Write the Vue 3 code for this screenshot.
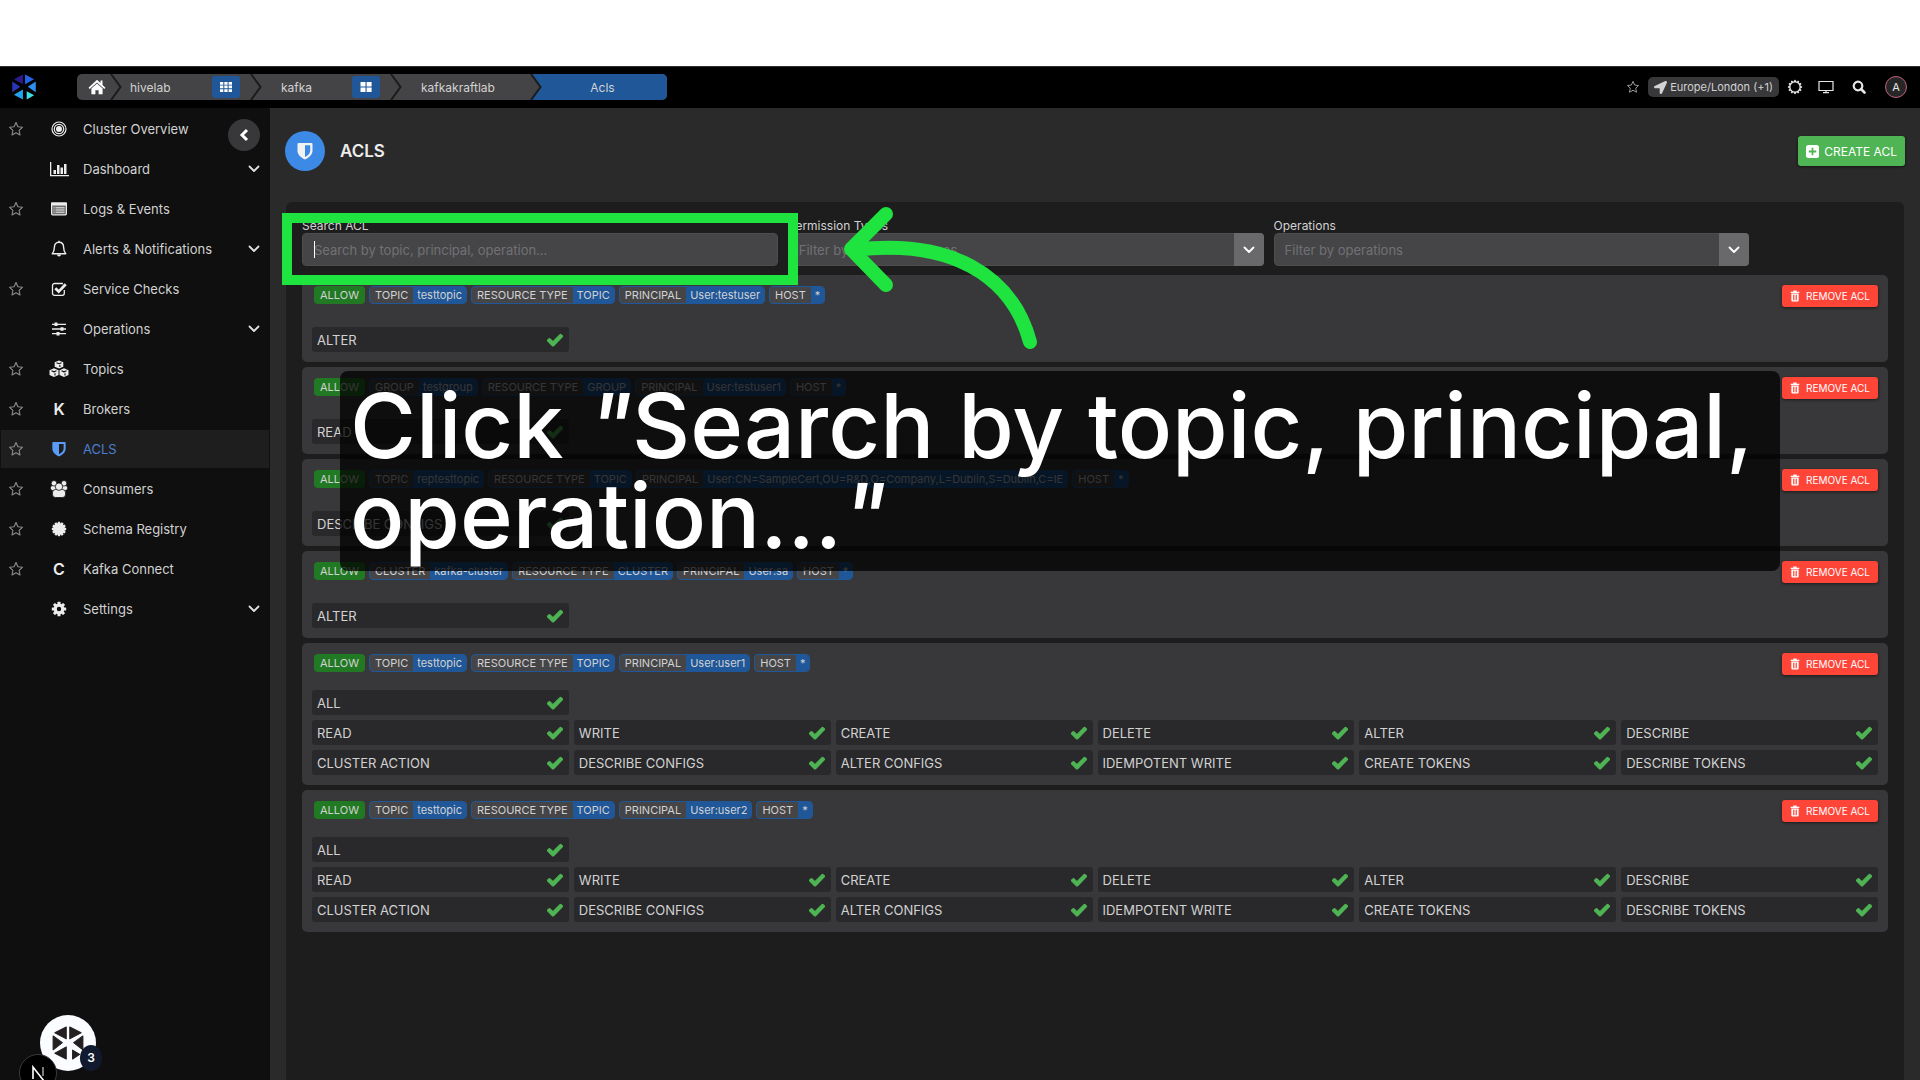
<script setup>
import { ref } from 'vue'

const nav = [
  { label: 'Cluster Overview', icon: 'target', star: true },
  { label: 'Dashboard', icon: 'chart', more: true },
  { label: 'Logs & Events', icon: 'list', star: true },
  { label: 'Alerts & Notifications', icon: 'bell', tall: true, more: true },
  { label: 'Service Checks', icon: 'check', star: true },
  { label: 'Operations', icon: 'sliders', more: true },
  { label: 'Topics', icon: 'cubes', tall: true, star: true },
  { label: 'Brokers', letter: 'K', star: true },
  { label: 'ACLS', icon: 'shield', star: true, active: true },
  { label: 'Consumers', icon: 'users', tall: true, star: true },
  { label: 'Schema Registry', icon: 'seal', star: true },
  { label: 'Kafka Connect', letter: 'C', star: true },
  { label: 'Settings', icon: 'gear', more: true },
]

const crumbs = [
  { label: 'hivelab', icon: 'grid9' },
  { label: 'kafka', icon: 'grid4' },
  { label: 'kafkakraftlab' },
]

const everyOp = [
  'READ', 'WRITE', 'CREATE', 'DELETE', 'ALTER', 'DESCRIBE',
  'CLUSTER ACTION', 'DESCRIBE CONFIGS', 'ALTER CONFIGS', 'IDEMPOTENT WRITE', 'CREATE TOKENS', 'DESCRIBE TOKENS',
]

const acl = (type, name, principal, all, ops) => ({
  tags: [[type, name], ['RESOURCE TYPE', type], ['PRINCIPAL', principal], ['HOST', '*']],
  all,
  ops,
})

const acls = [
  acl('TOPIC', 'testtopic', 'User:testuser', false, ['ALTER']),
  acl('GROUP', 'testgroup', 'User:testuser1', false, ['READ']),
  acl('TOPIC', 'reptesttopic', 'User:CN=SampleCert,OU=R&D,O=Company,L=Dublin,S=Dublin,C=IE', false, ['DESCRIBE CONFIGS']),
  acl('CLUSTER', 'kafka-cluster', 'User:sa', false, ['ALTER']),
  acl('TOPIC', 'testtopic', 'User:user1', true, everyOp),
  acl('TOPIC', 'testtopic', 'User:user2', true, everyOp),
]

const search = ref('')
const teeth = Array.from({ length: 12 }, (_, i) => i * 30)
const gearTeeth = Array.from({ length: 8 }, (_, i) => i * 45)
</script>

<template>
  <div class="page">
    <svg class="defs" width="0" height="0" aria-hidden="true">
      <symbol id="star" viewBox="0 0 16 16">
        <path d="M8 1.6l1.9 4.2 4.5.5-3.3 3.1.9 4.6L8 11.700l-4 2.300.9-4.600L1.600 6.300l4.500-.5z" fill="none" stroke="currentColor" stroke-width="1.100" stroke-linejoin="round" />
      </symbol>
      <symbol id="down" viewBox="0 0 12 12">
        <path d="M1.500 3.500L6 8l4.500-4.500" fill="none" stroke="currentColor" stroke-width="1.800" stroke-linecap="round" stroke-linejoin="round" />
      </symbol>
      <symbol id="tick" viewBox="0 0 512 512">
        <path fill="currentColor" stroke="currentColor" stroke-width="36" stroke-linejoin="round" d="M173.898 439.404l-150-150c-9.997-9.997-9.997-26.206 0-36.204l36.203-36.204c9.997-9.998 26.207-9.998 36.204 0L190 310 415 84c9.997-9.997 26.207-9.997 36.204 0l36.203 36.204c9.997 9.997 9.997 26.206 0 36.204l-277.300 283c-9.998 9.997-26.207 9.997-36.204-.001z" />
      </symbol>
      <symbol id="shield" viewBox="0 0 16 18">
        <path fill="currentColor" fill-rule="evenodd" d="M1.500 1h13a1 1 0 0 1 1 1v6.500c0 4-3 7-7.500 9C3.500 15.500.5 12.500.5 8.500V2a1 1 0 0 1 1-1zM8 3.300v11.700c3.200-1.600 5.200-3.800 5.200-6.500V3.300z" />
      </symbol>
      <symbol id="target" viewBox="0 0 16 16">
        <g fill="none" stroke="currentColor" stroke-width="1.200"><circle cx="8" cy="8" r="7" /><circle cx="8" cy="8" r="4.700" /></g>
        <circle cx="8" cy="8" r="3" fill="currentColor" />
      </symbol>
      <symbol id="chart" viewBox="0 0 20 16">
        <path fill="currentColor" d="M1 1h1.300v13H20v1.300H1zM4.500 9h2.500v4H4.500zM8 4h2.500v9H8zM11.500 6.500H14V13h-2.500zM15 3h2.500v10H15z" />
      </symbol>
      <symbol id="list" viewBox="0 0 18 16">
        <rect x="1.600" y="2" width="14.800" height="11.800" rx="1" fill="#6e6e6e" stroke="currentColor" stroke-width="1.200" />
        <path fill="currentColor" d="M1 1.500h16v3H1z" />
        <path d="M3.500 6.800h1M5.500 6.800h9M3.500 9h1M5.500 9h9M3.500 11.200h1M5.500 11.200h9" stroke="currentColor" stroke-width="1" />
      </symbol>
      <symbol id="bell" viewBox="0 0 16 18">
        <path d="M8 2.200c-3.200 0-4.600 2.300-4.600 5 0 3.600-1 5-2.200 6.600h13.600c-1.200-1.600-2.200-3-2.200-6.600 0-2.700-1.400-5-4.600-5z" fill="none" stroke="currentColor" stroke-width="1.400" stroke-linejoin="round" />
        <path d="M6 14.500a2 2 0 0 0 4 0zM7.300.8h1.400v2H7.300z" fill="currentColor" />
      </symbol>
      <symbol id="check" viewBox="0 0 16 16">
        <path d="M13.300 9v3.300a2 2 0 0 1-2 2H3.500a2 2 0 0 1-2-2V4.500a2 2 0 0 1 2-2H12" fill="none" stroke="currentColor" stroke-width="1.300" />
        <path d="M4.300 7.200l3.400 3.400 7-7.400" fill="none" stroke="currentColor" stroke-width="2.800" />
      </symbol>
      <symbol id="sliders" viewBox="0 0 16 16">
        <path d="M1 3.300h14M1 8h14M1 12.700h14" stroke="currentColor" stroke-width="1.300" />
        <path d="M3.500 1.500h3v3.600h-3zM9.500 6.200h3v3.600h-3zM5.500 10.900h3v3.600h-3z" fill="currentColor" />
      </symbol>
      <symbol id="cubes" viewBox="0 0 20 18">
        <g fill="currentColor">
          <path d="M10 .5l4.300 1.700v4.500L10 8.600 5.700 6.700V2.200zM5 8.300l4.500 1.900v4.700L5 17 .5 14.900v-4.700zM15 8.300l4.500 1.900v4.700L15 17l-4.500-2.100v-4.700z" />
        </g>
        <path d="M7.500 2.700l2.500 1 2.500-1M10.900 5.100v1.800M2.500 10.800l2.500 1 2.500-1M6 13.200v2.200M12.500 10.800l2.500 1 2.500-1M16 13.200v2.200" fill="none" stroke="#0f0f0f" stroke-width="1.100" />
      </symbol>
      <symbol id="users" viewBox="0 0 18 18">
        <g fill="currentColor" stroke="#0f0f0f" stroke-width=".8">
          <rect x=".5" y="5.500" width="7" height="5" rx="2" /><rect x="10.500" y="5.500" width="7" height="5" rx="2" />
          <circle cx="4" cy="3.300" r="2.800" /><circle cx="14" cy="3.300" r="2.800" />
          <rect x="2.500" y="9.500" width="13" height="8" rx="3" /><circle cx="9" cy="6.700" r="3.700" />
        </g>
      </symbol>
      <symbol id="seal" viewBox="0 0 16 16">
        <circle cx="8" cy="8" r="6" fill="currentColor" />
        <rect v-for="a in teeth" :key="a" x="6.800" y=".8" width="2.400" height="3" rx=".6" fill="currentColor" :transform="`rotate(${a} 8 8)`" />
      </symbol>
      <symbol id="sun" viewBox="0 0 16 16">
        <circle cx="8" cy="8" r="5.200" fill="none" stroke="currentColor" stroke-width="1.400" />
        <rect v-for="a in teeth" :key="a" x="7.200" y=".9" width="1.600" height="2" fill="currentColor" :transform="`rotate(${a} 8 8)`" />
      </symbol>
      <symbol id="gear" viewBox="0 0 16 16">
        <circle cx="8" cy="8" r="3.800" fill="none" stroke="currentColor" stroke-width="3.200" />
        <rect v-for="a in gearTeeth" :key="a" x="6.500" y=".8" width="3" height="3" rx=".5" fill="currentColor" :transform="`rotate(${a} 8 8)`" />
      </symbol>
      <symbol id="grid9" viewBox="0 0 12 12">
        <path fill="currentColor" d="M0 1h3.300v2.700H0zM4.300 1h3.300v2.700H4.300zM8.600 1H12v2.700H8.600zM0 4.600h3.300v2.700H0zM4.300 4.600h3.300v2.700H4.300zM8.600 4.600H12v2.700H8.600zM0 8.200h3.300v2.700H0zM4.300 8.200h3.300v2.700H4.300zM8.600 8.200H12v2.700H8.600z" />
      </symbol>
      <symbol id="grid4" viewBox="0 0 12 12">
        <path fill="currentColor" d="M.5 1h5v4.400h-5zM6.600 1h5v4.400h-5zM.5 6.500h5V11h-5zM6.600 6.500h5V11h-5z" />
      </symbol>
      <symbol id="home" viewBox="0 0 18 16">
        <path fill="currentColor" d="M9 .8L12.500 4V1.500h2V6L17.500 8.700l-1.200 1.300L9 3.500 1.700 10 .5 8.700z" />
        <path fill="currentColor" d="M9 4.600l5.600 5v5.600h-4v-4H7.400v4h-4V9.600z" />
      </symbol>
      <symbol id="arrow" viewBox="0 0 512 512">
        <path fill="currentColor" d="M444.520 3.520L28.740 195.420c-47.970 22.390-31.980 92.750 19.190 92.750h175.910v175.910c0 51.170 70.360 67.170 92.750 19.190l191.900-415.780c15.990-38.390-25.590-79.970-63.970-63.970z" />
      </symbol>
      <symbol id="bin" viewBox="0 0 12 14">
        <path fill="currentColor" fill-rule="evenodd" d="M4 .5h4v1.300h3.200v1.500H.8V1.800H4zM1.600 4h8.800v8.500a1 1 0 0 1-1 1H2.600a1 1 0 0 1-1-1zM3.700 5.500v6.500h1V5.500zM5.500 5.500v6.500h1V5.500zM7.300 5.500v6.500h1V5.500z" />
      </symbol>
      <symbol id="wheel" viewBox="0 0 90 96">
        <g stroke-width="3" stroke-linejoin="round">
          <path d="M40 3L8 19l32 17z" /><path d="M50 3l32 16-32 17z" />
          <path d="M3 28l26 19L3 67z" /><path d="M87 28L61 47l26 20z" />
          <path d="M40 59L8 77l32 16z" /><path d="M58 68l20 12-20 13z" />
        </g>
      </symbol>
    </svg>

    <div class="strip"></div>

    <header class="topbar">
      <a class="brand" href="#" aria-label="Home page">
        <svg width="24" height="26" viewBox="0 0 90 96">
          <path fill="#2c1a8c" d="M41 1L7 19l34 19z" /><path fill="#2563e8" d="M49 1l34 18-34 19z" />
          <path fill="#2b35b8" d="M1 27l30 20L1 68z" /><path fill="#2f8df0" d="M89 27L59 47l30 21z" />
          <path fill="#20a4ee" d="M41 57L7 77l34 18z" /><path fill="#3fdfe6" d="M55 64l28 15-28 16z" />
        </svg>
      </a>
      <nav class="crumbs" aria-label="Breadcrumb">
        <a class="home" href="#" aria-label="Home"><svg width="18" height="16"><use href="#home" /></svg></a>
        <template v-for="c in crumbs" :key="c.label">
          <svg class="sep" width="12" height="26" viewBox="0 0 12 26"><path d="M1 0l9.500 13L1 26" /></svg>
          <span class="crumb">
            <a href="#">{{ c.label }}</a>
            <button v-if="c.icon" type="button" :aria-label="c.label + ' menu'"><svg width="12" height="12"><use :href="'#' + c.icon" /></svg></button>
          </span>
        </template>
        <svg class="sep" width="12" height="26" viewBox="0 0 12 26"><path class="fill" d="M1 0h11v26H1l9.500-13z" /><path d="M1 0l9.500 13L1 26" /></svg>
        <span class="crumb last">Acls</span>
      </nav>
      <div class="tools">
        <button type="button" class="dim" aria-label="Favourite"><svg width="14" height="14"><use href="#star" /></svg></button>
        <button type="button" class="zone"><svg width="13" height="13"><use href="#arrow" /></svg>Europe/London (+1)</button>
        <button type="button" aria-label="Theme"><svg width="16" height="16"><use href="#sun" /></svg></button>
        <button type="button" aria-label="Display">
          <svg width="16" height="14" viewBox="0 0 16 14"><path d="M1 1.500h14v9H1zM8 10.500v2M5 12.600h6" fill="none" stroke="currentColor" stroke-width="1.200" /></svg>
        </button>
        <button type="button" aria-label="Search">
          <svg width="14" height="14" viewBox="0 0 14 14"><circle cx="6" cy="6" r="4.300" fill="none" stroke="currentColor" stroke-width="2.200" /><path d="M9 9l3.500 3.500" stroke="currentColor" stroke-width="2.600" stroke-linecap="round" /></svg>
        </button>
        <button type="button" class="avatar">A</button>
      </div>
    </header>

    <div class="body">
      <aside class="side">
        <a v-for="n in nav" :key="n.label" href="#" class="item" :class="{ active: n.active }">
          <span class="fav"><svg v-if="n.star" width="16" height="16"><use href="#star" /></svg></span>
          <span class="ico">
            <b v-if="n.letter">{{ n.letter }}</b>
            <svg v-else width="20" :height="n.tall ? 18 : 16"><use :href="'#' + n.icon" /></svg>
          </span>
          <span class="name">{{ n.label }}</span>
          <svg v-if="n.more" class="more" width="12" height="12"><use href="#down" /></svg>
        </a>
        <button type="button" class="collapse" aria-label="Collapse menu">
          <svg width="10" height="14" viewBox="0 0 10 14"><path d="M8 2L3 7l5 5" fill="none" stroke="currentColor" stroke-width="3" /></svg>
        </button>
      </aside>

      <main class="main">
        <div class="head">
          <span class="disc"><svg width="16" height="18"><use href="#shield" /></svg></span>
          <h1>ACLS</h1>
          <button type="button" class="create">
            <svg width="13" height="13" viewBox="0 0 13 13"><rect width="13" height="13" rx="2.500" fill="#fff" /><path d="M6.500 2.800v7.400M2.800 6.500h7.400" stroke="#4fb454" stroke-width="1.800" /></svg>
            CREATE ACL
          </button>
        </div>

        <section class="panel">
          <div class="filters">
            <div class="field">
              <label for="search">Search ACL</label>
              <div class="control">
                <input id="search" v-model="search" type="text" placeholder="Search by topic, principal, operation..." />
                <i class="caret"></i>
              </div>
            </div>
            <div class="field">
              <label for="perm">Permission Types</label>
              <div class="control">
                <select id="perm"><option>Filter by permission types</option></select>
                <span class="drop"><svg width="12" height="12"><use href="#down" /></svg></span>
              </div>
            </div>
            <div class="field">
              <label for="ops">Operations</label>
              <div class="control">
                <select id="ops"><option>Filter by operations</option></select>
                <span class="drop"><svg width="12" height="12"><use href="#down" /></svg></span>
              </div>
            </div>
          </div>

          <article v-for="(a, i) in acls" :key="i" class="card">
            <div class="cardhead">
              <span class="allow">ALLOW</span>
              <span v-for="t in a.tags" :key="t[0] + t[1]" class="tag"><span>{{ t[0] }}</span><span class="val">{{ t[1] }}</span></span>
              <button type="button" class="remove"><svg width="10" height="12"><use href="#bin" /></svg>REMOVE ACL</button>
            </div>
            <div class="ops">
              <div v-if="a.all" class="op">ALL<svg width="16" height="16"><use href="#tick" /></svg></div>
            </div>
            <div class="ops">
              <div v-for="o in a.ops" :key="o" class="op">{{ o }}<svg width="16" height="16"><use href="#tick" /></svg></div>
            </div>
          </article>
        </section>
      </main>
    </div>

    <div class="highlight"></div>
    <svg class="pointer" width="210" height="150" viewBox="840 204 210 150">
      <path d="M886 214l-35 35 35 36M854 250C950 238 1012 275 1030 342" />
    </svg>
    <p class="hint">Click <i>"</i>Search by topic, principal, operation...<i>"</i></p>

    <button type="button" class="chat" aria-label="Chat">
      <svg width="32" height="34"><use href="#wheel" /></svg>
    </button>
    <span class="count">3</span>
    <span class="dev">
      <svg width="36" height="36" viewBox="0 0 36 36">
        <path d="M13 24V12l11 14" fill="none" stroke="#fff" stroke-width="1.600" /><path d="M23 12v9" stroke="#999" stroke-width="1.600" />
      </svg>
    </span>
  </div>
</template>

<style>
body { margin: 0; background: #fff; }
</style>

<style scoped>
.page {
  position: relative;
  display: flex;
  flex-direction: column;
  height: 100vh;
  overflow: hidden;
  font-family: Inter, "Liberation Sans", sans-serif;
  font-size: 13px;
  color: #d2d2d2;
}
.page *, .page { box-sizing: border-box; }
.defs { position: absolute; }
button, input, select { font: inherit; color: inherit; border: 0; margin: 0; padding: 0; background: none; }
a { color: inherit; text-decoration: none; }
svg { display: block; flex: none; }

.strip { flex: 0 0 66px; background: #fff; }
.topbar {
  flex: 0 0 42px;
  display: flex;
  align-items: center;
  background: #000;
  border-top: 1px solid #2c3130;
  padding: 0 13px 1px 12px;
}
.brand { width: 65px; }
.crumbs { display: flex; height: 26px; border-radius: 5px; overflow: hidden; background: #444446; }
.home { display: flex; align-items: center; justify-content: center; width: 33px; padding-left: 6px; color: #fff; }
.sep path { fill: none; stroke: #1b1b1b; stroke-width: 2; }
.sep .fill { fill: #1f5799; stroke: none; }
.crumb { display: flex; align-items: center; justify-content: space-between; width: 128px; padding: 0 8px; font-size: 12px; }
.crumb:nth-of-type(n+2) { padding-left: 19px; }
.crumb button { display: flex; align-items: center; justify-content: center; width: 28px; height: 22px; margin-right: 2px; border-radius: 3px; background: #1f5799; color: #fff; }
.crumb.last { width: 125px; padding: 0 4px 0 0; justify-content: center; background: #1f5799; }
.tools { margin-left: auto; display: flex; align-items: center; color: #e6e6e6; }
.tools button { display: flex; align-items: center; }
.dim { color: #a0a0a0; }
.tools .zone { height: 20px; gap: 3px; margin: 0 8px; padding: 0 6px; border-radius: 5px; background: #38383a; font-size: 11px; color: #d2d2d2; }
.tools .zone + button { margin-right: 15px; }
.tools .zone + button + button { margin-right: 18px; }
.tools .avatar { width: 22px; height: 22px; margin: 0 0 0 19px; justify-content: center; border: 1px solid #c0607e; border-radius: 50%; background: #262626; font-size: 11px; }

.body { flex: 1; min-height: 0; display: flex; background: #2a2a2a; }
.side { position: relative; flex: 0 0 270px; padding-top: 1px; background: #0f0f0f; }
.item { display: flex; align-items: center; height: 40px; padding-left: 8px; padding-right: 10px; }
.item.active { background: #1e1e1e; border: 1px solid #0f0f0f; padding-left: 7px; padding-right: 9px; color: #4a7fd0; }
.fav { width: 41px; color: #8c8c8c; }
.ico { width: 20px; margin-right: 14px; color: #ececec; text-align: center; }
.ico b { font-size: 16px; font-weight: 600; }
.active .ico { color: #5a9bf8; }
.more { margin-left: auto; color: #e0e0e0; }
.collapse { position: absolute; top: 11px; right: 10px; display: flex; align-items: center; justify-content: center; width: 32px; height: 32px; border-radius: 50%; background: #38383a; color: #fff; }

.main { flex: 1; min-width: 0; display: flex; flex-direction: column; padding: 23px 15px 0; }
.head { display: flex; align-items: center; height: 40px; margin-bottom: 31px; }
.disc { display: flex; align-items: center; justify-content: center; width: 40px; height: 40px; border-radius: 50%; background: #3c8ae6; color: #f2f2f2; }
h1 { margin: 0 0 0 15px; font-size: 17px; font-weight: 600; color: #ececec; }
.create { display: flex; align-items: center; gap: 5px; height: 30px; margin-left: auto; padding: 0 8px; border-radius: 3px; background: #4fb454; color: #fff; font-size: 12px; box-shadow: 0 1px 3px #0008; }
.panel { flex: 1; margin: 0 1px; padding: 14px 16px 0; border-radius: 6px 6px 0 0; background: #1d1d1d; display: flex; flex-direction: column; gap: 5px; }
.filters { display: flex; gap: 10px; margin-bottom: 4px; }
.field { flex: 0 0 30%; }
.field label { display: block; height: 17px; line-height: 20px; font-size: 12px; }
.control { position: relative; height: 33px; border-radius: 4px; overflow: hidden; }
.control input, .control select { display: block; width: 100%; height: 100%; padding: 0 10px; border: 1px solid #4d4d4f; border-radius: 4px; background: #454547; color: #717174; appearance: none; }
.control input { padding: 0 11px; }
.control input::placeholder { color: #717174; opacity: 1; }
.caret { position: absolute; left: 12px; top: 8px; width: 1px; height: 17px; background: #fff; }
.drop { position: absolute; right: 0; top: 0; bottom: 0; display: flex; align-items: center; justify-content: center; width: 30px; background: #69696b; color: #fff; pointer-events: none; }

.card { display: flex; flex-direction: column; gap: 5px; padding: 10px; border-radius: 5px; background: #38383a; }
.cardhead { display: flex; align-items: flex-start; gap: 4px; height: 32px; padding-top: 1px; padding-left: 2px; font-size: 11px; line-height: 16px; }
.allow { padding: 1px 6px; border-radius: 4px; background: #217a23; }
.tag { display: flex; border: 1px solid #1f5799; border-radius: 4px; overflow: hidden; background: #454547; }
.tag span { padding: 0 5px; }
.tag .val { padding: 0 4px; background: #1f5799; }
.remove { display: flex; align-items: center; gap: 6px; height: 22px; margin: -1px 0 0 auto; padding: 0 8px; border-radius: 3px; background: #ff4438; color: #fff; font-size: 10px; box-shadow: 0 1px 3px #0008; }
.ops { display: grid; grid-template-columns: repeat(6, 1fr); gap: 5px; }
.op { display: flex; align-items: center; justify-content: space-between; height: 25px; padding: 0 6px 0 5px; border-radius: 3px; background: #29292b; }
.op svg { color: #4fb454; }

.highlight { position: absolute; left: 282px; top: 213px; width: 516px; height: 72px; border: 10px solid #1fe33f; }
.pointer { position: absolute; left: 840px; top: 204px; }
.pointer path { fill: none; stroke: #1fe33f; stroke-width: 14; stroke-linecap: round; stroke-linejoin: round; }
.hint { position: absolute; left: 340px; top: 371px; width: 1440px; height: 200px; margin: 0; padding: 10px; border-radius: 8px; background: rgba(0, 0, 0, 0.75); color: #fff; font-family: Inter, sans-serif; font-size: 90px; font-weight: 500; line-height: 90px; }

.chat { position: absolute; left: 40px; bottom: 9px; display: flex; align-items: center; justify-content: center; width: 56px; height: 56px; border-radius: 50%; background: #fafcff; color: #231f20; fill: #231f20; stroke: #231f20; }
.count { position: absolute; left: 80px; bottom: 9px; width: 22px; height: 26px; border-radius: 50%; background: #111a2e; color: #fff; font-size: 12px; font-weight: 600; line-height: 26px; text-align: center; }
.dev { position: absolute; left: 19px; bottom: -12px; border: 1px solid #3a3a3a; border-radius: 50%; background: #000; }
</style>
